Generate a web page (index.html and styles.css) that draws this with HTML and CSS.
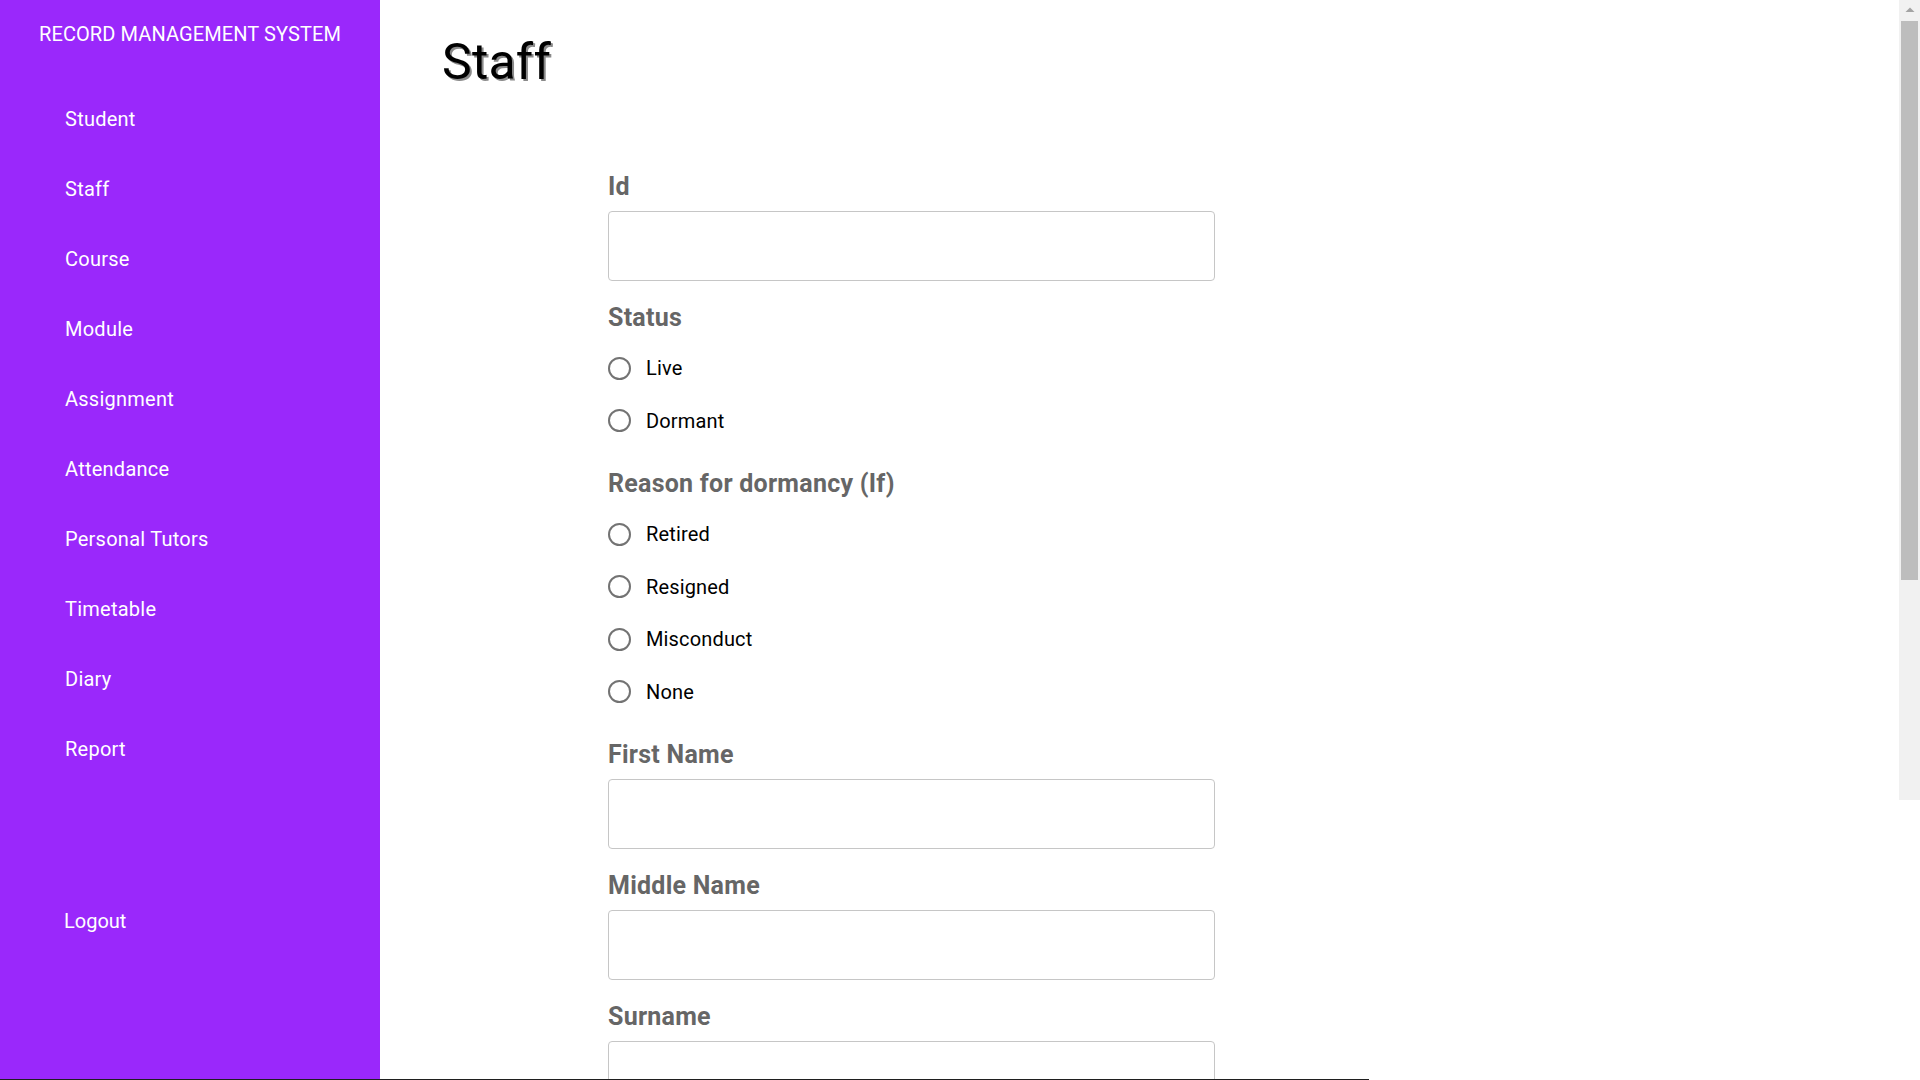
FILE: index.html
```html
<!DOCTYPE html>
<html lang="en">
<head>
<meta charset="utf-8">
<title>Staff - Record Management System</title>
<link rel="stylesheet" href="styles.css">
</head>
<body>
<div class="app">
  <aside class="sidebar">
    <div class="brand">RECORD MANAGEMENT SYSTEM</div>
    <nav class="nav">
      <a class="nav-link" href="#">Student</a>
      <a class="nav-link" href="#">Staff</a>
      <a class="nav-link" href="#">Course</a>
      <a class="nav-link" href="#">Module</a>
      <a class="nav-link" href="#">Assignment</a>
      <a class="nav-link" href="#">Attendance</a>
      <a class="nav-link" href="#">Personal Tutors</a>
      <a class="nav-link" href="#">Timetable</a>
      <a class="nav-link" href="#">Diary</a>
      <a class="nav-link" href="#">Report</a>
    </nav>
    <a class="nav-link logout" href="#">Logout</a>
  </aside>
  <main class="main">
    <h1 class="page-title">Staff</h1>
    <form class="form">
      <label class="field-label" for="id">Id</label>
      <input class="text-input" id="id" type="text">

      <div class="field-label">Status</div>
      <div class="radio-group">
        <label class="radio-row"><input type="radio" name="status"><span>Live</span></label>
        <label class="radio-row"><input type="radio" name="status"><span>Dormant</span></label>
      </div>

      <div class="field-label">Reason for dormancy (If)</div>
      <div class="radio-group">
        <label class="radio-row"><input type="radio" name="reason"><span>Retired</span></label>
        <label class="radio-row"><input type="radio" name="reason"><span>Resigned</span></label>
        <label class="radio-row"><input type="radio" name="reason"><span>Misconduct</span></label>
        <label class="radio-row"><input type="radio" name="reason"><span>None</span></label>
      </div>

      <label class="field-label" for="first">First Name</label>
      <input class="text-input" id="first" type="text">

      <label class="field-label" for="middle">Middle Name</label>
      <input class="text-input" id="middle" type="text">

      <label class="field-label" for="surname">Surname</label>
      <input class="text-input" id="surname" type="text">
    </form>
  </main>
</div>
<div class="fake-scrollbar">
  <div class="sb-arrow">
    <svg width="10" height="6" viewBox="0 0 10 6"><polygon points="5,0.5 9.5,5 0.5,5" fill="#a3a3a3"/></svg>
  </div>
  <div class="sb-thumb"></div>
</div>
<div class="bottom-line"></div>
</body>
</html>
```

FILE: styles.css
```css
* {
  box-sizing: border-box;
}

html, body {
  margin: 0;
  padding: 0;
  height: 1080px;
  overflow: hidden;
  background: #ffffff;
  font-family: Roboto, "Liberation Sans", Arial, sans-serif;
}

.app {
  display: flex;
  height: 1080px;
}

.sidebar {
  width: 380px;
  flex-shrink: 0;
  background: #9a28fb;
  display: flex;
  flex-direction: column;
  padding-top: 22px;
}

.brand {
  color: #ffffff;
  font-size: 20px;
  line-height: 24px;
  text-align: center;
  font-weight: 400;
  letter-spacing: 0.1px;
}

.nav {
  display: flex;
  flex-direction: column;
  margin-top: 38px;
}

.nav-link {
  display: block;
  height: 70px;
  line-height: 70px;
  padding-left: 65px;
  color: #ffffff;
  font-size: 20px;
  letter-spacing: 0.25px;
  text-decoration: none;
}

.logout {
  margin-top: 102px;
  padding-left: 64px;
  letter-spacing: 0;
}

.main {
  flex: 1;
  padding: 32px 0 0 62px;
}

.page-title {
  margin: 0;
  font-size: 50px;
  line-height: 60px;
  font-weight: 400;
  color: #000000;
  letter-spacing: 0.2px;
  text-shadow: 2px 2px 0 #8a8a8a;
}

.form {
  width: 607px;
  margin: 81px 0 0 166px;
  display: flex;
  flex-direction: column;
}

.field-label {
  display: block;
  font-size: 25px;
  line-height: 28px;
  height: 28px;
  font-weight: 700;
  letter-spacing: 0.25px;
  color: #666666;
  margin-bottom: 10px;
}

.text-input {
  display: block;
  width: 607px;
  height: 70px;
  border: 1px solid #c6c6c6;
  border-radius: 4px;
  margin: 0 0 23px 0;
  padding: 0 12px;
  font-size: 20px;
  font-family: inherit;
  background: #ffffff;
}

.radio-group {
  display: flex;
  flex-direction: column;
  margin-top: 0;
  margin-bottom: 23px;
}

.radio-row {
  display: flex;
  align-items: center;
  gap: 15px;
  height: 52.5px;
  font-size: 20px;
  letter-spacing: 0.15px;
  color: #000000;
}

.radio-row input {
  appearance: none;
  -webkit-appearance: none;
  margin: 0;
  width: 23px;
  height: 23px;
  border: 2px solid #737373;
  border-radius: 50%;
  background: #ffffff;
  flex-shrink: 0;
}

.fake-scrollbar {
  position: absolute;
  top: 0;
  right: 0;
  width: 21px;
  height: 800px;
  background: #f1f1f1;
  display: flex;
  flex-direction: column;
  align-items: center;
}

.sb-arrow {
  height: 21px;
  width: 21px;
  display: flex;
  align-items: center;
  justify-content: center;
  padding-bottom: 2px;
}

.sb-thumb {
  width: 17px;
  height: 559px;
  background: #bdbdbd;
}

.bottom-line {
  position: absolute;
  left: 0;
  top: 1079px;
  width: 1369px;
  height: 1px;
  background: #1f1f1f;
}
```
